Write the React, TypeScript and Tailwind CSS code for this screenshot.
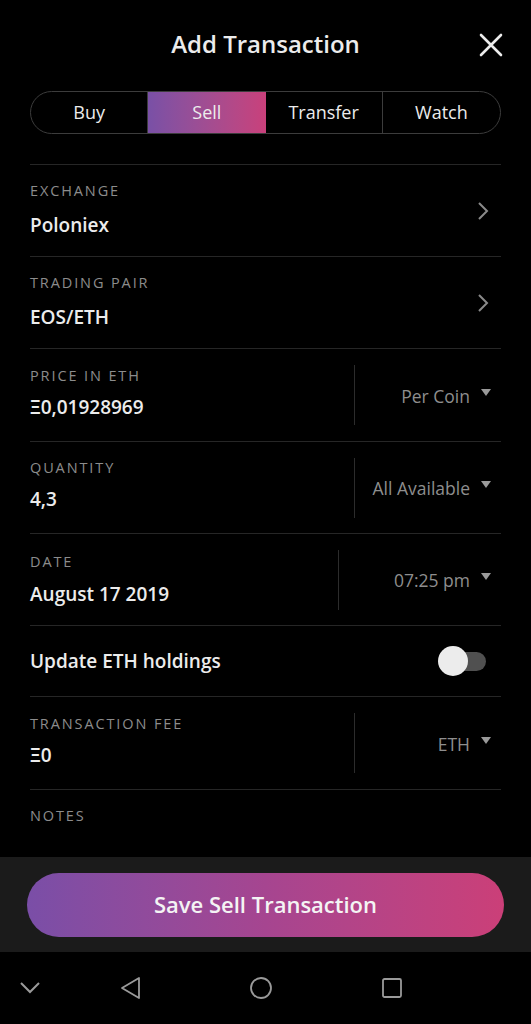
import React from 'react';

const font = { fontFamily: '"Open Sans", "Noto Sans", sans-serif' };

const Caret = () => (
  <svg width="10" height="7" viewBox="0 0 10 7" className="ml-[11px] mb-[8px]">
    <polygon points="0,0 10,0 5,7" fill="#9a9a9a" />
  </svg>
);

const Chevron = () => (
  <svg width="14" height="20" viewBox="0 0 14 20" className="mr-[11px]">
    <polyline points="3,2 11,10 3,18" fill="none" stroke="#8a8a8a" strokeWidth="2" />
  </svg>
);

const Label: React.FC<{ children: React.ReactNode }> = ({ children }) => (
  <div className="text-[14.5px] leading-5 tracking-[0.13em] text-[#8c8c8c] uppercase">{children}</div>
);

const Value: React.FC<{ children: React.ReactNode; gap?: string }> = ({ children, gap = 'mt-[12px]' }) => (
  <div className={`${gap} text-[19px] leading-6 font-semibold text-[#ececec]`}>{children}</div>
);

const LinkRow: React.FC<{ label: string; value: string }> = ({ label, value }) => (
  <div className="h-[92px] flex items-center border-b border-[#262626]">
    <div className="flex-1 -mt-[4px]">
      <Label>{label}</Label>
      <Value gap="mt-[12px]">{value}</Value>
    </div>
    <Chevron />
  </div>
);

const SplitRow: React.FC<{ label: string; value: string; right: string; rightW: string; h?: string }> = ({
  label,
  value,
  right,
  rightW,
  h = 'h-[92px]',
}) => (
  <div className={`${h} flex items-center border-b border-[#262626]`}>
    <div className="flex-1 -mt-[6px]">
      <Label>{label}</Label>
      <Value gap="mt-[9px]">{value}</Value>
    </div>
    <div className="w-px h-[60px] bg-[#2c2c2c]" />
    <div className={`${rightW} flex items-center justify-end pr-[10px] mt-[2px]`}>
      <span className="text-[17.5px] text-[#8e8e8e]">{right}</span>
      <Caret />
    </div>
  </div>
);

export default function App() {
  return (
    <div className="w-[531px] h-[1024px] bg-black flex flex-col text-white" style={font}>
      {/* header */}
      <div className="h-[88px] flex items-center justify-center relative">
        <h1 className="text-[24px] font-semibold text-[#ececec]">Add Transaction</h1>
        <button className="absolute right-[28px] top-[33px]">
          <svg width="24" height="24" viewBox="0 0 24 24">
            <path d="M2 2L22 22M22 2L2 22" stroke="#ececec" strokeWidth="2.6" strokeLinecap="round" />
          </svg>
        </button>
      </div>

      <div className="mx-[30px] mt-[3px] h-[43px] grid grid-cols-4 rounded-full border border-[#3c3c3c] overflow-hidden text-[18px] text-[#ececec]">
        <div className="flex items-center justify-center border-r border-[#3c3c3c]">Buy</div>
        <div className="flex items-center justify-center bg-gradient-to-r from-[#7950a6] to-[#c9407b]">Sell</div>
        <div className="flex items-center justify-center border-r border-[#3c3c3c]">Transfer</div>
        <div className="flex items-center justify-center">Watch</div>
      </div>

      <div className="mx-[30px] mt-[30px] border-t border-[#262626]">
        <LinkRow label="Exchange" value="Poloniex" />
        <LinkRow label="Trading Pair" value="EOS/ETH" />
        <SplitRow label="Price in ETH" value="Ξ0,01928969" right="Per Coin" rightW="w-[146px]" h="h-[93px]" />
        <SplitRow label="Quantity" value="4,3" right="All Available" rightW="w-[146px]" />
        <div className="h-[92px] flex items-center border-b border-[#262626]">
          <div className="flex-1 -mt-[2px]">
            <Label>Date</Label>
            <Value gap="mt-[10px]">August 17 2019</Value>
          </div>
          <div className="w-px h-[60px] bg-[#2c2c2c]" />
          <div className="w-[162px] flex items-center justify-end pr-[10px] mt-[2px]">
            <span className="text-[17.5px] text-[#8e8e8e]">07:25 pm</span>
            <Caret />
          </div>
        </div>
        <div className="h-[71px] flex items-center border-b border-[#262626]">
          <div className="flex-1 text-[19px] font-semibold text-[#ececec]">Update ETH holdings</div>
          <div className="relative w-[48px] h-[30px] mr-[15px] flex items-center">
            <div className="absolute left-[10px] right-0 h-[19px] rounded-full bg-[#505050]" />
            <div className="absolute left-0 w-[30px] h-[30px] rounded-full bg-[#ececec]" />
          </div>
        </div>
        <SplitRow label="Transaction Fee" value="Ξ0" right="ETH" rightW="w-[146px]" h="h-[93px]" />
        <div className="pt-[16px]">
          <Label>Notes</Label>
        </div>
      </div>

      <div className="flex-1" />

      <div className="h-[95px] bg-[#1b1b1b] flex items-center px-[27px]">
        <button className="w-full h-[64px] rounded-full bg-gradient-to-r from-[#7a4ea7] via-[#a64590] to-[#cb3f78] text-[22px] font-semibold text-[#f4f4f4]">
          Save Sell Transaction
        </button>
      </div>

      <div className="h-[72px] bg-black flex items-center pl-[18px]">
        <svg width="24" height="24" viewBox="0 0 24 24">
          <polyline points="3,7 12,16 21,7" fill="none" stroke="#9a9a9a" strokeWidth="2" />
        </svg>
        <svg width="24" height="24" viewBox="0 0 24 24" className="ml-[77px]">
          <polygon points="20,2 20,22 3,12" fill="none" stroke="#9a9a9a" strokeWidth="1.8" strokeLinejoin="round" />
        </svg>
        <svg width="24" height="24" viewBox="0 0 24 24" className="ml-[106px]">
          <circle cx="12" cy="12" r="10" fill="none" stroke="#9a9a9a" strokeWidth="1.8" />
        </svg>
        <svg width="24" height="24" viewBox="0 0 24 24" className="ml-[107px]">
          <rect x="3" y="3" width="18" height="18" rx="1.5" fill="none" stroke="#9a9a9a" strokeWidth="1.8" />
        </svg>
      </div>
    </div>
  );
}
